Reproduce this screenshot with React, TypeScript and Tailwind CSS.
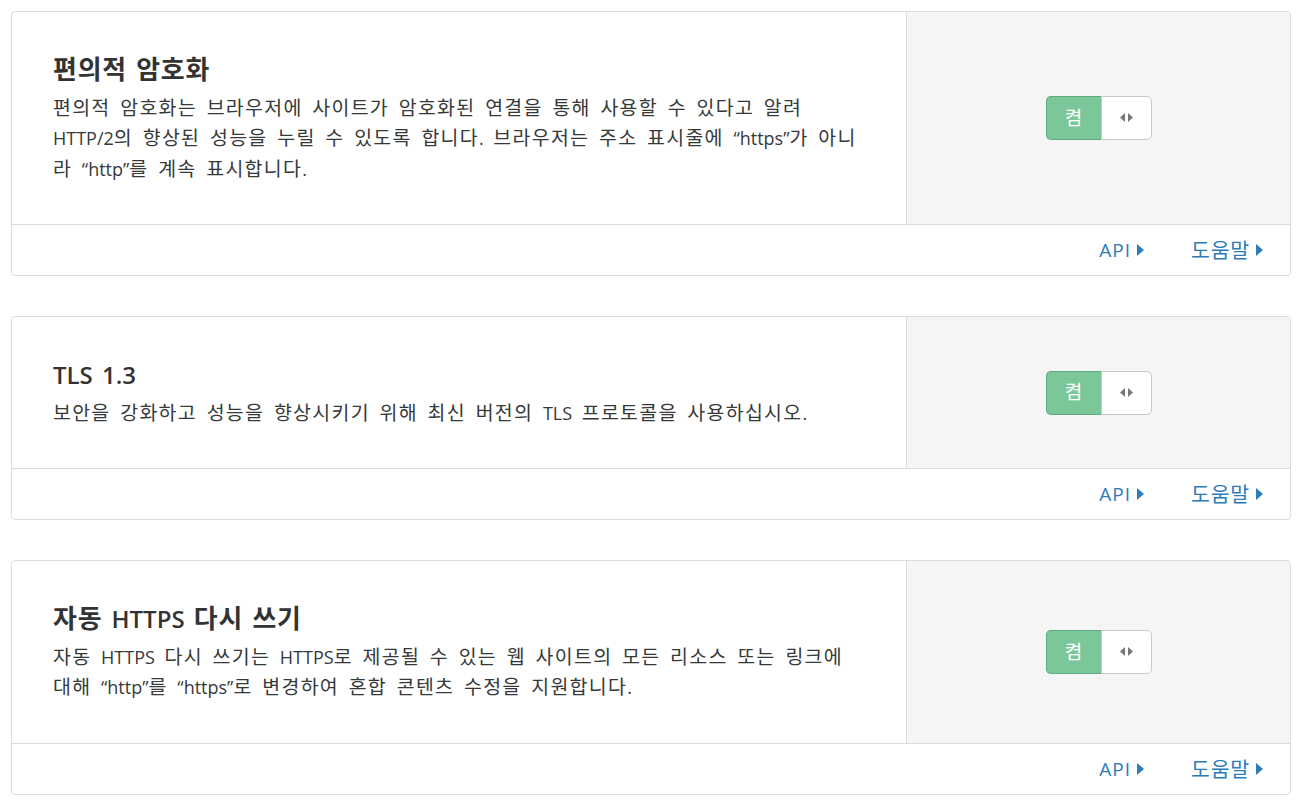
import React from "react";

const sections = [
  {
    title: "편의적 암호화",
    desc: "편의적 암호화는 브라우저에 사이트가 암호화된 연결을 통해 사용할 수 있다고 알려 HTTP/2의 향상된 성능을 누릴 수 있도록 합니다. 브라우저는 주소 표시줄에 “https”가 아니라 “http”를 계속 표시합니다.",
  },
  {
    title: "TLS 1.3",
    desc: "보안을 강화하고 성능을 향상시키기 위해 최신 버전의 TLS 프로토콜을 사용하십시오.",
  },
  {
    title: "자동 HTTPS 다시 쓰기",
    desc: "자동 HTTPS 다시 쓰기는 HTTPS로 제공될 수 있는 웹 사이트의 모든 리소스 또는 링크에 대해 “http”를 “https”로 변경하여 혼합 콘텐츠 수정을 지원합니다.",
  },
];

// hangul runs get a slightly larger, wider face, like the reference
function Ko({ text, wide }: { text: string; wide?: boolean }) {
  const parts = text.split(/([\uAC00-\uD7A3]+)/);
  return (
    <>
      {parts.map((p, i) =>
        /[\uAC00-\uD7A3]/.test(p) ? (
          <span
            key={i}
            className={
              wide
                ? "text-[1.08em] leading-[1] tracking-[1.3px]"
                : "text-[1.08em] leading-[1] tracking-[0.8px]"
            }
          >
            {p}
          </span>
        ) : (
          <React.Fragment key={i}>{p}</React.Fragment>
        )
      )}
    </>
  );
}

function Caret() {
  return (
    <svg width="7" height="12" viewBox="0 0 7 12" className="ml-[6px] inline-block">
      <path d="M0 0 L7 6 L0 12 Z" fill="currentColor" />
    </svg>
  );
}

function Toggle() {
  return (
    <div className="flex h-[44px] w-[106px] rounded-[5px]">
      <div className="flex w-[55px] items-center justify-center rounded-l-[5px] border border-r-0 border-[#63a97f] bg-[#7bc79a] text-[19px] text-white">
        켬
      </div>
      <div className="flex flex-1 items-center justify-center gap-[3px] rounded-r-[5px] border border-[#c8c8c8] bg-white">
        <svg width="5" height="9" viewBox="0 0 5 9">
          <path d="M5 0 L0 4.5 L5 9 Z" fill="#777" />
        </svg>
        <svg width="5" height="9" viewBox="0 0 5 9">
          <path d="M0 0 L5 4.5 L0 9 Z" fill="#777" />
        </svg>
      </div>
    </div>
  );
}

export default function App() {
  return (
    <div
      className="min-h-screen bg-white px-[11px] pt-[11px] text-[#333]"
      style={{ fontFamily: '"Open Sans", "Noto Sans CJK KR", sans-serif' }}
    >
      {sections.map((s) => (
        <div key={s.title} className="mb-[40px] rounded-[4px] border border-[#dcdcdc]">
          <div className="flex">
            <div className="flex-1 px-[41px] py-[40px]">
              <h3 className="mt-[2px] mb-[7px] text-[24px] font-semibold leading-[32px] text-[#333] [word-spacing:3px]">
                <Ko text={s.title} />
              </h3>
              <p className="text-[18px] leading-[30.3px] text-[#36393a] [word-spacing:5px]">
                <Ko text={s.desc} wide />
              </p>
            </div>
            <div className="flex w-[384px] items-center justify-center rounded-tr-[4px] border-l border-[#dcdcdc] bg-[#f5f5f5]">
              <Toggle />
            </div>
          </div>
          <div className="flex h-[51px] items-center justify-end gap-[47px] border-t border-[#dcdcdc] pr-[27px] text-[19px] text-[#2c7cb9]">
            <a className="flex items-center tracking-[1px]">
              API
              <Caret />
            </a>
            <a className="flex items-center">
              <Ko text="도움말" />
              <Caret />
            </a>
          </div>
        </div>
      ))}
    </div>
  );
}
